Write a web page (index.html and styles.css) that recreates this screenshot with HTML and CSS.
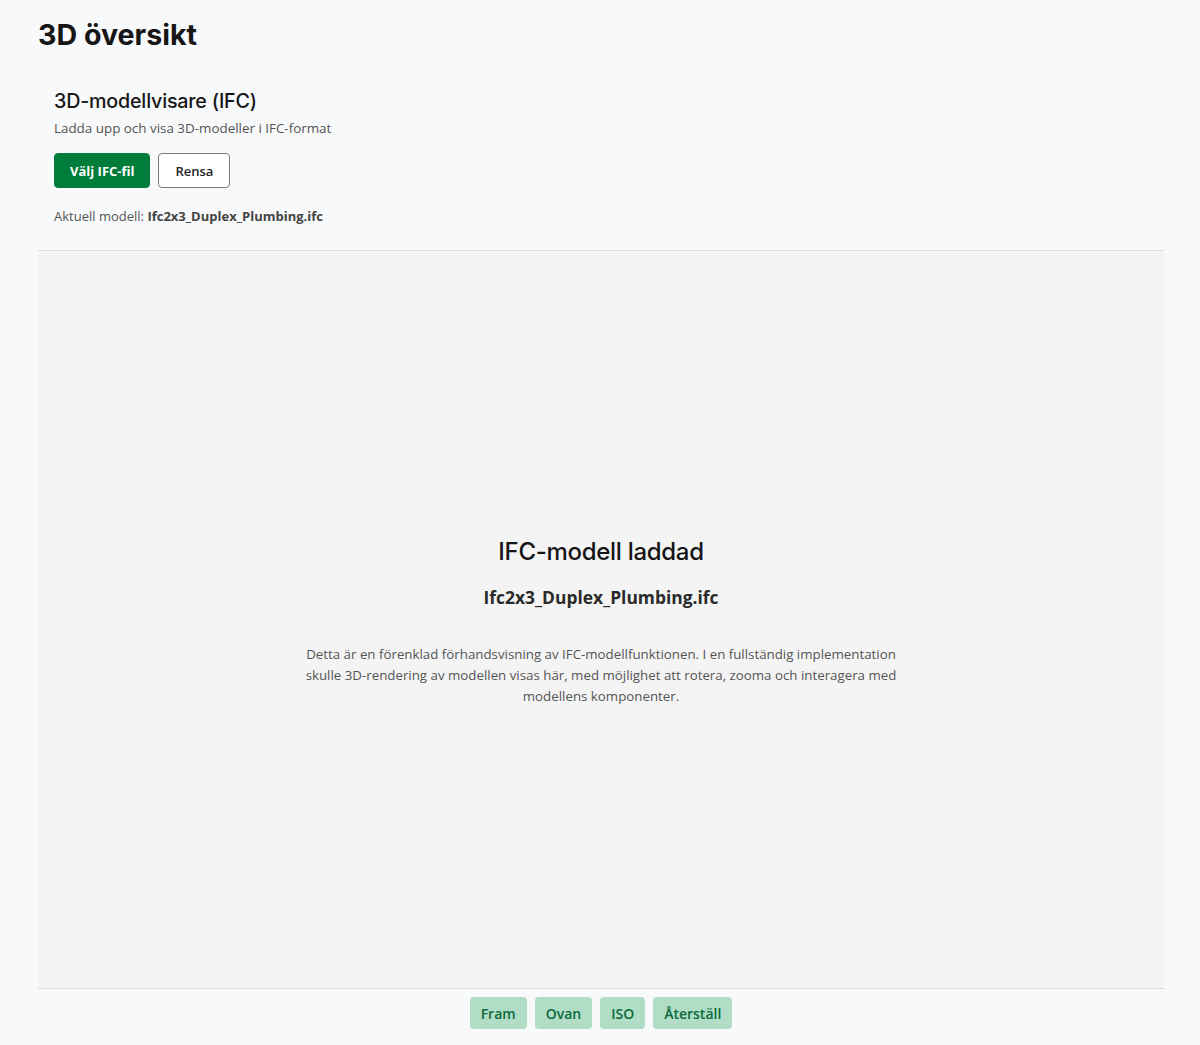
FILE: index.html
```html
<!DOCTYPE html>
<html lang="sv">
<head>
<meta charset="utf-8">
<title>3D översikt</title>
<link rel="stylesheet" href="styles.css">
</head>
<body>
<main class="page">
  <h1 class="page-title">3D översikt</h1>
  <section class="card">
    <div class="card-head">
      <h2 class="card-title">3D-modellvisare (IFC)</h2>
      <p class="card-sub">Ladda upp och visa 3D-modeller i IFC-format</p>
      <div class="actions">
        <button class="btn btn-primary">Välj IFC-fil</button>
        <button class="btn btn-outline">Rensa</button>
      </div>
      <p class="current">Aktuell modell: <strong>Ifc2x3_Duplex_Plumbing.ifc</strong></p>
    </div>
    <div class="viewer">
      <div class="viewer-content">
        <h3 class="viewer-title">IFC-modell laddad</h3>
        <p class="viewer-file">Ifc2x3_Duplex_Plumbing.ifc</p>
        <p class="viewer-text">Detta är en förenklad förhandsvisning av IFC-modellfunktionen. I en fullständig implementation skulle 3D-rendering av modellen visas här, med möjlighet att rotera, zooma och interagera med modellens komponenter.</p>
      </div>
    </div>
    <div class="controls">
      <button class="ctrl">Fram</button>
      <button class="ctrl">Ovan</button>
      <button class="ctrl">ISO</button>
      <button class="ctrl">Återställ</button>
    </div>
  </section>
</main>
</body>
</html>
```

FILE: styles.css
```css
* { box-sizing: border-box; }
html, body { margin: 0; padding: 0; }
body {
  background: #f8f9fa;
  font-family: "Open Sans", "Noto Sans", sans-serif;
  color: #222;
}
.page {
  padding: 15px 36px 0 38px;
}
.page-title {
  font-family: Inter, "Open Sans", sans-serif;
  font-weight: 700;
  font-size: 28.6px;
  line-height: 40px;
  margin: 0 0 32px;
  color: #161616;
}
.card-head {
  padding: 0 16px 24px;
}
.card-title {
  font-family: Inter, "Open Sans", sans-serif;
  font-weight: 500;
  font-size: 19.7px;
  line-height: 28px;
  margin: 0;
  color: #161616;
  letter-spacing: -0.2px;
}
.card-sub {
  margin: 3px 0 0;
  font-size: 13.4px;
  line-height: 20px;
  color: #555;
}
.actions {
  display: flex;
  gap: 8px;
  margin-top: 15px;
}
.btn {
  font-family: "Open Sans", sans-serif;
  font-size: 13px;
  font-weight: 700;
  height: 35px;
  padding: 0 15px;
  border-radius: 4px;
  cursor: pointer;
}
.btn-primary {
  background: #007c3b;
  color: #fff;
  border: 1px solid #007c3b;
}
.btn-outline {
  background: #fff;
  color: #222;
  border: 1px solid #7a7a7a;
  padding: 0 16px;
  font-weight: 600;
}
.current {
  margin: 18px 0 0;
  font-size: 13px;
  line-height: 20px;
  color: #555;
}
.current strong {
  color: #444;
  font-weight: 700;
}
.viewer {
  border-top: 1px solid #dcdcdc;
  border-bottom: 1px solid #d8d8d8;
  height: 739px;
  display: flex;
  align-items: center;
  justify-content: center;
  background: #f8f9fa;
}
.viewer-content {
  background: #f4f4f4;
  border-radius: 4px;
  width: 100%;
  height: 100%;
  display: flex;
  flex-direction: column;
  align-items: center;
  justify-content: center;
  text-align: center;
  padding-top: 3px;
}
.viewer-title {
  font-family: Inter, "Open Sans", sans-serif;
  font-weight: 500;
  font-size: 24px;
  line-height: 32px;
  margin: 0;
  color: #161616;
  letter-spacing: -0.3px;
}
.viewer-file {
  margin: 16px 0 0;
  font-size: 17.4px;
  font-weight: 700;
  line-height: 26px;
  color: #2a2a2a;
}
.viewer-text {
  margin: 34px 0 0;
  max-width: 600px;
  font-size: 13.3px;
  line-height: 21px;
  color: #555;
}
.controls {
  display: flex;
  justify-content: center;
  gap: 8px;
  padding: 8px 0 15px;
}
.ctrl {
  font-family: "Open Sans", sans-serif;
  background: #b1dcc6;
  color: #0a6a3a;
  border: none;
  border-radius: 4px;
  height: 32px;
  padding: 0 11px;
  font-size: 14px;
  font-weight: 600;
  cursor: pointer;
}
```
